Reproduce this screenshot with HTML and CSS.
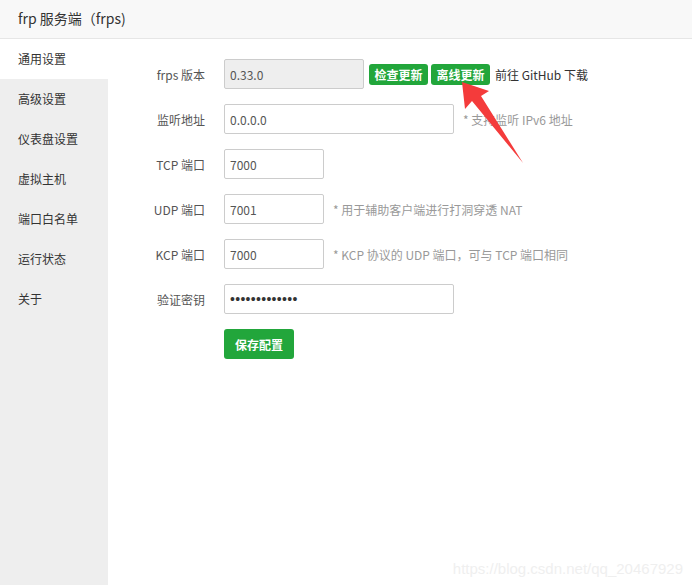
FILE: index.html
```html
<!DOCTYPE html>
<html lang="zh-CN">
<head>
    <meta charset="UTF-8">
    <title>frp 服务端（frps)</title>
    <link rel="stylesheet" href="styles.css">
</head>
<body>
    <header class="title-bar">frp 服务端（frps)</header>
    <div class="layout">
        <nav class="side-menu">
            <div class="menu-item active">通用设置</div>
            <div class="menu-item">高级设置</div>
            <div class="menu-item">仪表盘设置</div>
            <div class="menu-item">虚拟主机</div>
            <div class="menu-item">端口白名单</div>
            <div class="menu-item">运行状态</div>
            <div class="menu-item">关于</div>
        </nav>
        <main class="content">
            <div class="form-row">
                <label class="form-label">frps 版本</label>
                <input class="form-input short-wide" type="text" value="0.33.0" disabled>
                <button class="btn btn-small first">检查更新</button>
                <button class="btn btn-small">离线更新</button>
                <span class="link-text">前往 GitHub 下载</span>
            </div>
            <div class="form-row">
                <label class="form-label">监听地址</label>
                <input class="form-input wide" type="text" value="0.0.0.0">
                <span class="hint">* 支持监听 IPv6 地址</span>
            </div>
            <div class="form-row">
                <label class="form-label">TCP 端口</label>
                <input class="form-input narrow" type="text" value="7000">
            </div>
            <div class="form-row">
                <label class="form-label">UDP 端口</label>
                <input class="form-input narrow" type="text" value="7001">
                <span class="hint">* 用于辅助客户端进行打洞穿透 NAT</span>
            </div>
            <div class="form-row">
                <label class="form-label">KCP 端口</label>
                <input class="form-input narrow" type="text" value="7000">
                <span class="hint">* KCP 协议的 UDP 端口，可与 TCP 端口相同</span>
            </div>
            <div class="form-row">
                <label class="form-label">验证密钥</label>
                <input class="form-input wide password" type="password" value="abcdefghijklm">
            </div>
            <div class="form-row">
                <span class="form-label"></span>
                <button class="btn btn-save">保存配置</button>
            </div>
        </main>
    </div>

    <!-- 标注箭头 -->
    <svg class="arrow" width="692" height="585" viewBox="0 0 692 585">
        <polygon points="462,82 489,91 481,96 523,163 472,101 465,109" fill="#f43b3b"/>
    </svg>
    <div class="watermark">https://blog.csdn.net/qq_20467929</div>
</body>
</html>
```

FILE: styles.css
```css
body {
    font-family: "Noto Sans CJK SC", "Noto Sans", sans-serif;
    margin: 0;
    padding: 0;
    background-color: white;
    width: 692px;
    height: 585px;
    overflow: hidden;
    color: #333;
}
.title-bar {
    height: 38px;
    line-height: 36px;
    padding-left: 18px;
    font-size: 14px;
    color: #333;
    background-color: #f8f8f8;
    border-bottom: 1px solid #e6e6e6;
}
.layout {
    display: flex;
    height: 546px;
}
.side-menu {
    width: 108px;
    background-color: #eeeeee;
    flex-shrink: 0;
}
.menu-item {
    height: 40px;
    line-height: 40px;
    padding-left: 18px;
    font-size: 12px;
    color: #333;
}
.menu-item.active {
    background-color: white;
}
.content {
    flex: 1;
    padding-top: 20px;
    padding-left: 17px;
}
.form-row {
    display: flex;
    align-items: center;
    height: 30px;
    margin-bottom: 15px;
    font-size: 12px;
}
.form-label {
    width: 80px;
    text-align: right;
    margin-right: 19px;
    color: #555;
}
.form-input {
    box-sizing: border-box;
    height: 30px;
    border: 1px solid #ccc;
    border-radius: 2px;
    padding: 0 5px;
    font-family: "Noto Sans CJK SC", "Noto Sans", sans-serif;
    font-size: 12px;
    color: #555;
    background-color: white;
    outline: none;
}
.form-input:disabled {
    background-color: #eeeeee;
    color: #555;
}
.form-input.password {
    font-family: "Liberation Sans", Arial, sans-serif;
    font-size: 14px;
    letter-spacing: 0.3px;
    color: #333;
}
.short-wide {
    width: 140px;
}
.wide {
    width: 230px;
}
.narrow {
    width: 100px;
}
.btn {
    border: none;
    border-radius: 3px;
    background-color: #22a63b;
    color: white;
    font-family: "Noto Sans CJK SC", "Noto Sans", sans-serif;
    font-size: 12px;
    font-weight: bold;
    cursor: pointer;
}
.btn-small {
    height: 21px;
    width: 59px;
    padding: 0;
    margin-left: 3px;
}
.btn-small.first {
    margin-left: 5px;
}
.btn-save {
    height: 30px;
    width: 70px;
    padding: 0;
}
.link-text {
    margin-left: 5px;
    color: #333;
}
.hint {
    margin-left: 9px;
    color: #999;
}
.arrow {
    position: absolute;
    left: 0;
    top: 0;
    pointer-events: none;
}
.watermark {
    position: absolute;
    right: 9px;
    bottom: 8px;
    font-family: "Liberation Sans", Arial, sans-serif;
    font-size: 15px;
    color: #efefef;
}
```
